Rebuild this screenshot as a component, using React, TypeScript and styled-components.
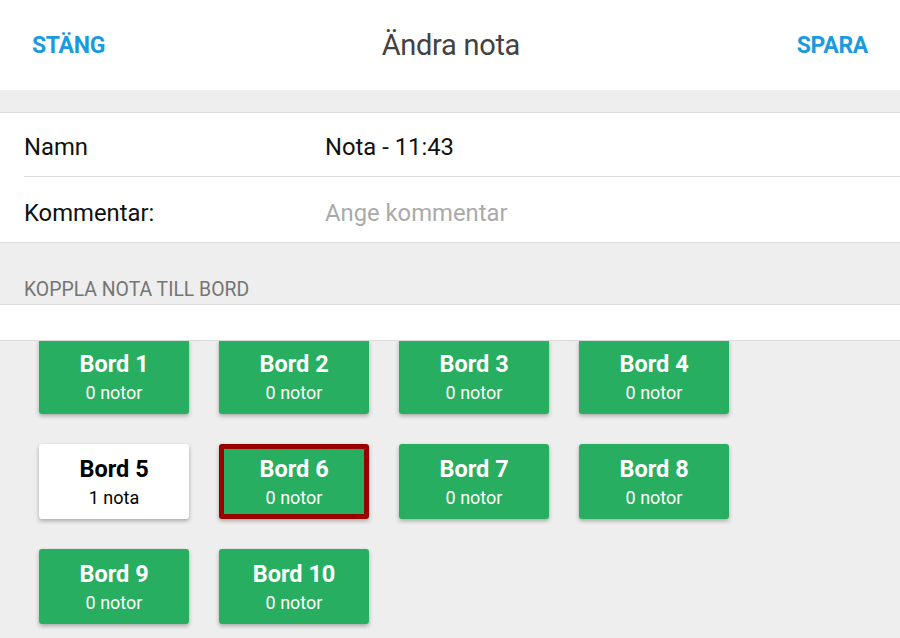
import React from "react";
import styled, { createGlobalStyle } from "styled-components";

const Global = createGlobalStyle`
  html, body { margin: 0; padding: 0; background: #eeeeee; }
  body { font-family: Roboto, "Noto Sans", sans-serif; }
  * { box-sizing: border-box; }
`;

const Page = styled.div`
  width: 900px;
  height: 638px;
  overflow: hidden;
  display: flex;
  flex-direction: column;
  background: #eeeeee;
`;

const Header = styled.header`
  height: 90px;
  background: #ffffff;
  display: flex;
  align-items: center;
  justify-content: space-between;
  padding: 0 32px 0 32px;
`;

const HeaderButton = styled.button`
  border: none;
  background: none;
  padding: 0;
  font-family: Roboto, sans-serif;
  font-weight: 700;
  font-size: 23px;
  letter-spacing: -0.3px;
  color: #1a9be0;
  cursor: pointer;
`;

const Title = styled.h1`
  margin: 0;
  font-weight: 400;
  font-size: 29px;
  color: #424242;
  letter-spacing: -0.3px;
`;

const Spacer = styled.div`
  height: 23px;
  border-bottom: 1px solid #dcdcdc;
`;

const Form = styled.div`
  background: #ffffff;
  border-bottom: 1px solid #dcdcdc;
`;

const Row = styled.div<{ $last?: boolean }>`
  display: flex;
  align-items: center;
  height: ${(p) => (p.$last ? "65px" : "64px")};
  padding-top: ${(p) => (p.$last ? "6px" : "4px")};
  margin-left: 24px;
  border-bottom: ${(p) => (p.$last ? "none" : "1px solid #dcdcdc")};
`;

const Label = styled.div`
  width: 301px;
  font-size: 23.8px;
  color: #111111;
`;

const Value = styled.div<{ $placeholder?: boolean }>`
  font-size: 23.8px;
  color: ${(p) => (p.$placeholder ? "#aaaaaa" : "#111111")};
`;

const SectionHeader = styled.div`
  height: 62px;
  padding: 35px 0 0 24px;
  font-size: 19.4px;
  color: #757575;
  border-bottom: 1px solid #dcdcdc;
`;

const WhiteBand = styled.div`
  height: 36px;
  background: #ffffff;
  border-bottom: 1px solid #dcdcdc;
  position: relative;
  z-index: 1;
`;

const Grid = styled.div`
  display: grid;
  grid-template-columns: repeat(4, 150px);
  column-gap: 30px;
  row-gap: 30px;
  padding: 0 0 0 39px;
  margin-top: -2px;
`;

const Tile = styled.div<{ $white?: boolean; $selected?: boolean }>`
  height: 75px;
  border-radius: 3px;
  background: ${(p) => (p.$white ? "#ffffff" : "#27ae60")};
  color: ${(p) => (p.$white ? "#000000" : "#ffffff")};
  border: ${(p) => (p.$selected ? "5px solid #990000" : "none")};
  box-shadow: 0 2px 4px rgba(0, 0, 0, 0.3);
  display: flex;
  flex-direction: column;
  align-items: center;
  justify-content: center;
  gap: 6px;
`;

const TileTitle = styled.div`
  font-size: 23.5px;
  font-weight: 700;
  line-height: 26px;
`;

const TileSub = styled.div`
  font-size: 18px;
  line-height: 20px;
`;

const tables = [
  { n: 1, c: "0 notor" },
  { n: 2, c: "0 notor" },
  { n: 3, c: "0 notor" },
  { n: 4, c: "0 notor" },
  { n: 5, c: "1 nota", white: true },
  { n: 6, c: "0 notor", selected: true },
  { n: 7, c: "0 notor" },
  { n: 8, c: "0 notor" },
  { n: 9, c: "0 notor" },
  { n: 10, c: "0 notor" },
];

export default function App() {
  return (
    <Page>
      <Global />
      <Header>
        <HeaderButton>STÄNG</HeaderButton>
        <Title>Ändra nota</Title>
        <HeaderButton>SPARA</HeaderButton>
      </Header>
      <Spacer />
      <Form>
        <Row>
          <Label>Namn</Label>
          <Value>Nota - 11:43</Value>
        </Row>
        <Row $last>
          <Label>Kommentar:</Label>
          <Value $placeholder>Ange kommentar</Value>
        </Row>
      </Form>
      <SectionHeader>KOPPLA NOTA TILL BORD</SectionHeader>
      <WhiteBand />
      <Grid>
        {tables.map((t) => (
          <Tile key={t.n} $white={t.white} $selected={t.selected}>
            <TileTitle>Bord {t.n}</TileTitle>
            <TileSub>{t.c}</TileSub>
          </Tile>
        ))}
      </Grid>
    </Page>
  );
}
